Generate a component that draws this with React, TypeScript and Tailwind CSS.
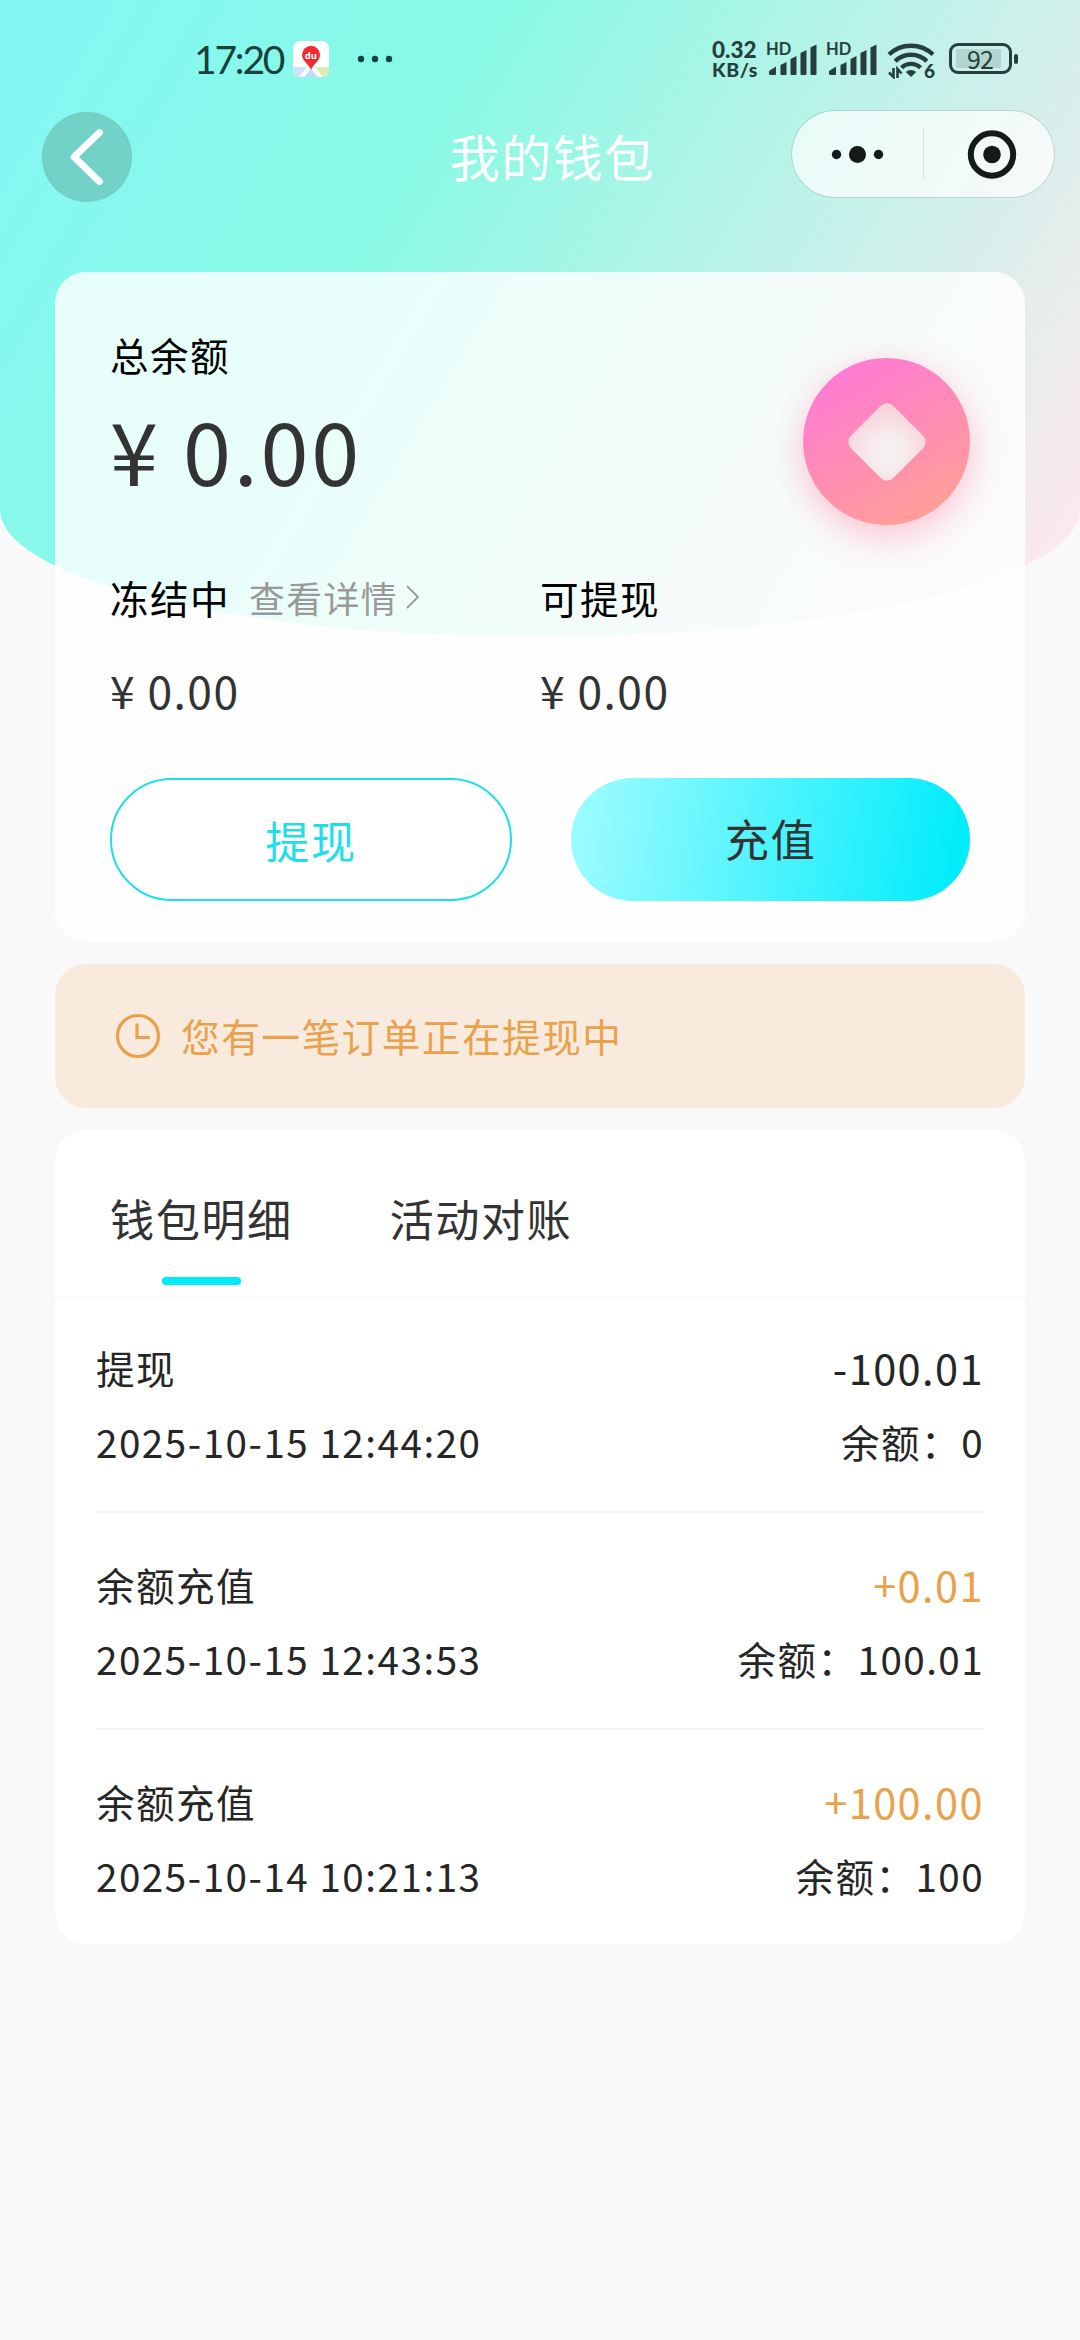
import React from "react";

type Entry = {
  title: string;
  time: string;
  amount: string;
  balance: string;
  income: boolean;
};

const entries: Entry[] = [
  { title: "提现", time: "2025-10-15 12:44:20", amount: "-100.01", balance: "0", income: false },
  { title: "余额充值", time: "2025-10-15 12:43:53", amount: "+0.01", balance: "100.01", income: true },
  { title: "余额充值", time: "2025-10-14 10:21:13", amount: "+100.00", balance: "100", income: true },
];

function MapAppIcon() {
  return (
    <svg className="ml-[9px] h-[36px] w-[36px] tracking-normal" viewBox="0 0 36 36">
      <clipPath id="app">
        <rect width="36" height="36" rx="7" />
      </clipPath>
      <g clipPath="url(#app)">
        <rect width="36" height="36" fill="#fff" />
        <path d="M0 26h14L6 36H0z" fill="#cfe3fb" />
        <path d="M22 26h14v10h-6z" fill="#dcebb0" />
        <path d="M18 28l7 8H11z" fill="#bcdcf8" />
      </g>
      <path d="M18 29c-1.600-5.500-9-8.500-9-15.200a9 9 0 0 1 18 0c0 6.700-7.400 9.700-9 15.200z" fill="#ee2b33" />
      <text x="18" y="17.500" textAnchor="middle" fontSize="9.500" fontWeight="700" fontFamily="Open Sans, sans-serif" fill="#fff">
        du
      </text>
    </svg>
  );
}

function Signal() {
  return (
    <div className="relative h-[36px] w-[52px] tracking-normal">
      <svg className="h-[36px] w-[52px]" viewBox="0 0 52 36" fill="#263f3c">
        <path d="M2 30l7-4.500V33q0 1-1 1H3.500Q2 34 2 32.500z" />
        <path d="M13.500 24l6-3v12q0 1-1 1h-4q-1 0-1-1z" />
        <path d="M23.500 18l6-3v18q0 1-1 1h-4q-1 0-1-1z" />
        <path d="M33.500 12l6-3v24q0 1-1 1h-4q-1 0-1-1z" />
        <path d="M43.500 6.500l6-3V33q0 1-1 1h-4q-1 0-1-1z" />
      </svg>
      <span className="absolute top-[-1px] left-[-1px] font-['Lato'] text-[16.500px] leading-[18px] font-bold text-[#263f3c]">HD</span>
    </div>
  );
}

function Wifi() {
  return (
    <div className="relative ml-[8px] h-[38px] w-[50px] tracking-normal">
      <svg className="h-[38px] w-[48px]" viewBox="0 0 48 38" fill="none" stroke="#263f3c" strokeWidth="4.400">
        <path d="M2 13.500a32 32 0 0 1 44 0" />
        <path d="M8.200 20.300a22.500 22.500 0 0 1 31.600 0" />
        <path d="M14.500 26.800a13.500 13.500 0 0 1 19 0" />
        <path d="M24 36l-5.200-5a7.500 7.500 0 0 1 10.400 0z" fill="#263f3c" stroke="none" />
        <path d="M6.500 27v9L2 31.500M10.500 37v-9L14.500 32.500" strokeWidth="2.600" />
      </svg>
      <span className="absolute top-[21px] left-[37px] font-['Lato'] text-[19px] leading-[18px] font-black text-[#263f3c]">6</span>
    </div>
  );
}

function Battery() {
  return (
    <div className="ml-[12px] flex items-center gap-[2px]">
      <div className="flex h-[31px] w-[63px] items-center rounded-[9px] border-[3px] border-[#263f3c] px-[4px]">
        <div className="flex h-[19px] w-[45px] items-center justify-center bg-[#263f3c]/15 pl-[3px] font-['Noto_Sans_CJK_SC'] text-[25px] leading-none tracking-[-1px] text-[#263f3c]">
          92
        </div>
      </div>
      <div className="h-[10px] w-[4px] rounded-[2px] bg-[#263f3c]" />
    </div>
  );
}

function StatusBar() {
  return (
    <div className="flex h-[100px] items-start pt-[41px] text-[#16413d]">
      <div className="ml-[194px] w-[90px] font-['Lato'] text-[39px] leading-[36px] tracking-[-2.200px] whitespace-nowrap">17:20</div>
      <MapAppIcon />
      <svg className="ml-[28px] h-[36px] w-[36px]" viewBox="0 0 36 36" fill="#16413d">
        <circle cx="4" cy="18" r="3.200" />
        <circle cx="18" cy="18" r="3.200" />
        <circle cx="32" cy="18" r="3.200" />
      </svg>
      <div className="ml-auto flex items-start pr-[62px]">
        <div className="mr-[6px] w-[49px] font-['Lato'] leading-[18px] font-black text-[#263f3c]">
          <div className="text-[22.500px] tracking-[0px]">0.32</div>
          <div className="mt-[2px] text-[19.500px] tracking-[0.600px]">KB/s</div>
        </div>
        <Signal />
        <div className="w-[8px]" />
        <Signal />
        <Wifi />
        <div className="pt-[2px]">
          <Battery />
        </div>
      </div>
    </div>
  );
}

function NavBar() {
  return (
    <div className="flex h-[172px] items-start">
      <div className="ml-[42px] mt-[12px] flex h-[90px] w-[90px] items-center justify-center rounded-full border border-[#6fc9bd]/50 bg-[#72d2c8]">
        <svg className="h-[60px] w-[40px]" viewBox="0 0 40 60" fill="none" stroke="#fff" strokeWidth="6.800" strokeLinecap="round" strokeLinejoin="round">
          <path d="M32.500 5.500L7 30l25.500 24.500" />
        </svg>
      </div>
      <div className="ml-[318px] mt-[25px] text-[50px] leading-[60px] tracking-[1.440px] text-white">我的钱包</div>
      <div className="ml-auto mr-[25px] mt-[10px] flex h-[88px] w-[264px] items-center rounded-full border border-black/10 bg-white/70 bg-clip-padding">
        <svg className="h-[86px] w-[131px]" viewBox="0 0 131 86" fill="#14191a">
          <circle cx="44.500" cy="43.500" r="4.700" />
          <circle cx="65.500" cy="43.500" r="8.500" />
          <circle cx="86.500" cy="43.500" r="4.700" />
        </svg>
        <div className="h-[52px] w-px bg-black/10" />
        <svg className="h-[86px] w-[130px]" viewBox="0 0 130 86">
          <circle cx="68" cy="43.500" r="21.200" fill="none" stroke="#14191a" strokeWidth="6" />
          <circle cx="68" cy="43.500" r="8.800" fill="#14191a" />
        </svg>
      </div>
    </div>
  );
}

function Coin() {
  return (
    <div className="mt-[33px] flex h-[167px] w-[167px] items-center justify-center rounded-full bg-[linear-gradient(152deg,#ff7cd2_14%,#ff8bb6_48%,#ff9f98_88%)] shadow-[0_10px_36px_rgba(255,110,150,0.42)]">
      <div className="h-[60px] w-[60px] rotate-45 rounded-[9px] bg-[radial-gradient(circle_at_62%_62%,#f5f4f4_0%,#f6eaec_35%,#f8d3d9_85%)]" />
    </div>
  );
}

function BalanceCard() {
  return (
    <section className="mx-[55px] h-[670px] rounded-[31px] bg-white/80 px-[55px] pt-[54px]">
      <div className="flex justify-between">
        <div>
          <div className="text-[38.600px] leading-[56px] text-black">总余额</div>
          <div className="mt-[17px] text-[86.400px] leading-[100px] tracking-[2.800px]">¥ 0.00</div>
        </div>
        <div className="-mt-px">
          <Coin />
        </div>
      </div>
      <div className="mt-[44px] grid grid-cols-2">
        <div>
          <div className="flex items-center">
            <span className="text-[38.600px] leading-[56px] text-black">冻结中</span>
            <span className="ml-[19px] text-[35.800px] leading-[56px] text-[#999]">查看详情</span>
            <svg className="ml-[7px] h-[26px] w-[16px]" viewBox="0 0 16 26" fill="none" stroke="#999" strokeWidth="1.800">
              <path d="M2 2l11 11L2 24" />
            </svg>
          </div>
          <div className="mt-[35px] text-[44.400px] leading-[60px]">¥ 0.00</div>
        </div>
        <div>
          <div className="text-[38.600px] leading-[56px] text-black">可提现</div>
          <div className="mt-[35px] text-[44.400px] leading-[60px]">¥ 0.00</div>
        </div>
      </div>
      <div className="mt-[58px] flex justify-between">
        <button className="h-[123px] w-[402px] rounded-full border-2 border-[#1edfe9] bg-white pt-[2px] text-[44.200px] tracking-[1.440px] text-[#1edfe9]">
          提现
        </button>
        <button className="h-[123px] w-[399px] rounded-full bg-[linear-gradient(100deg,#98fbff_6%,#00ecfb_96%)] pb-[2px] text-[44.200px] tracking-[1.440px] text-[#333]">
          充值
        </button>
      </div>
    </section>
  );
}

function Notice() {
  return (
    <section className="mx-[55px] mt-[22px] flex h-[144px] items-center rounded-[31px] bg-[#f8eadd] pl-[60px] text-[#eaa14b]">
      <svg className="h-[46px] w-[46px]" viewBox="0 0 46 46" fill="none" stroke="currentColor" strokeWidth="3.200">
        <circle cx="23" cy="23" r="20.500" />
        <path d="M22 10.500V24.500h13" />
      </svg>
      <span className="ml-[20px] pb-[2px] text-[38.700px] leading-[56px]">您有一笔订单正在提现中</span>
    </section>
  );
}

function EntryRow({ entry, last }: { entry: Entry; last: boolean }) {
  return (
    <li className={last ? "h-[216px] pt-[43px]" : "h-[217px] border-b-2 border-[#f5f5f5] pt-[43px]"}>
      <div className="flex items-center justify-between leading-[56px]">
        <span className="text-[38.600px]">{entry.title}</span>
        <span className={entry.income ? "text-[41.500px] text-[#eaa14b]" : "text-[41.500px]"}>{entry.amount}</span>
      </div>
      <div className="mt-[18px] flex items-center justify-between text-[38.600px] leading-[56px]">
        <span className="tracking-[1.520px]">{entry.time}</span>
        <span>余额：{entry.balance}</span>
      </div>
    </li>
  );
}

function Ledger() {
  return (
    <section className="mx-[55px] mt-[22px] h-[814px] rounded-[31px] bg-white">
      <div className="flex h-[168px] border-b-2 border-[#fcfcfc] pt-[56px] pl-[55px] text-[44.200px] leading-[64px]">
        <div className="flex flex-col items-center">
          <span>钱包明细</span>
          <div className="mt-[27px] h-[8px] w-[79px] rounded-[4px] bg-[#00ebf8]" />
        </div>
        <span className="ml-[97px]">活动对账</span>
      </div>
      <ul className="-mt-[2px] px-[41px] text-[#262626]">
        {entries.map((entry, i) => (
          <EntryRow key={entry.time} entry={entry} last={i === entries.length - 1} />
        ))}
      </ul>
    </section>
  );
}

export default function App() {
  return (
    <div className="relative isolate h-[2340px] w-[1080px] overflow-hidden bg-[#f9f9f9] font-['Noto_Sans_CJK_SC',sans-serif] tracking-[1.440px] text-[#333]">
      <div className="absolute inset-x-0 top-0 -z-10 h-[637px] bg-[linear-gradient(121deg,#82f7f5_0%,#8af9e4_36%,#e4edec_83%,#fae9ee_94%)] [border-radius:0_0_50%_50%/0_0_20%_20%]" />
      <StatusBar />
      <NavBar />
      <BalanceCard />
      <Notice />
      <Ledger />
    </div>
  );
}
